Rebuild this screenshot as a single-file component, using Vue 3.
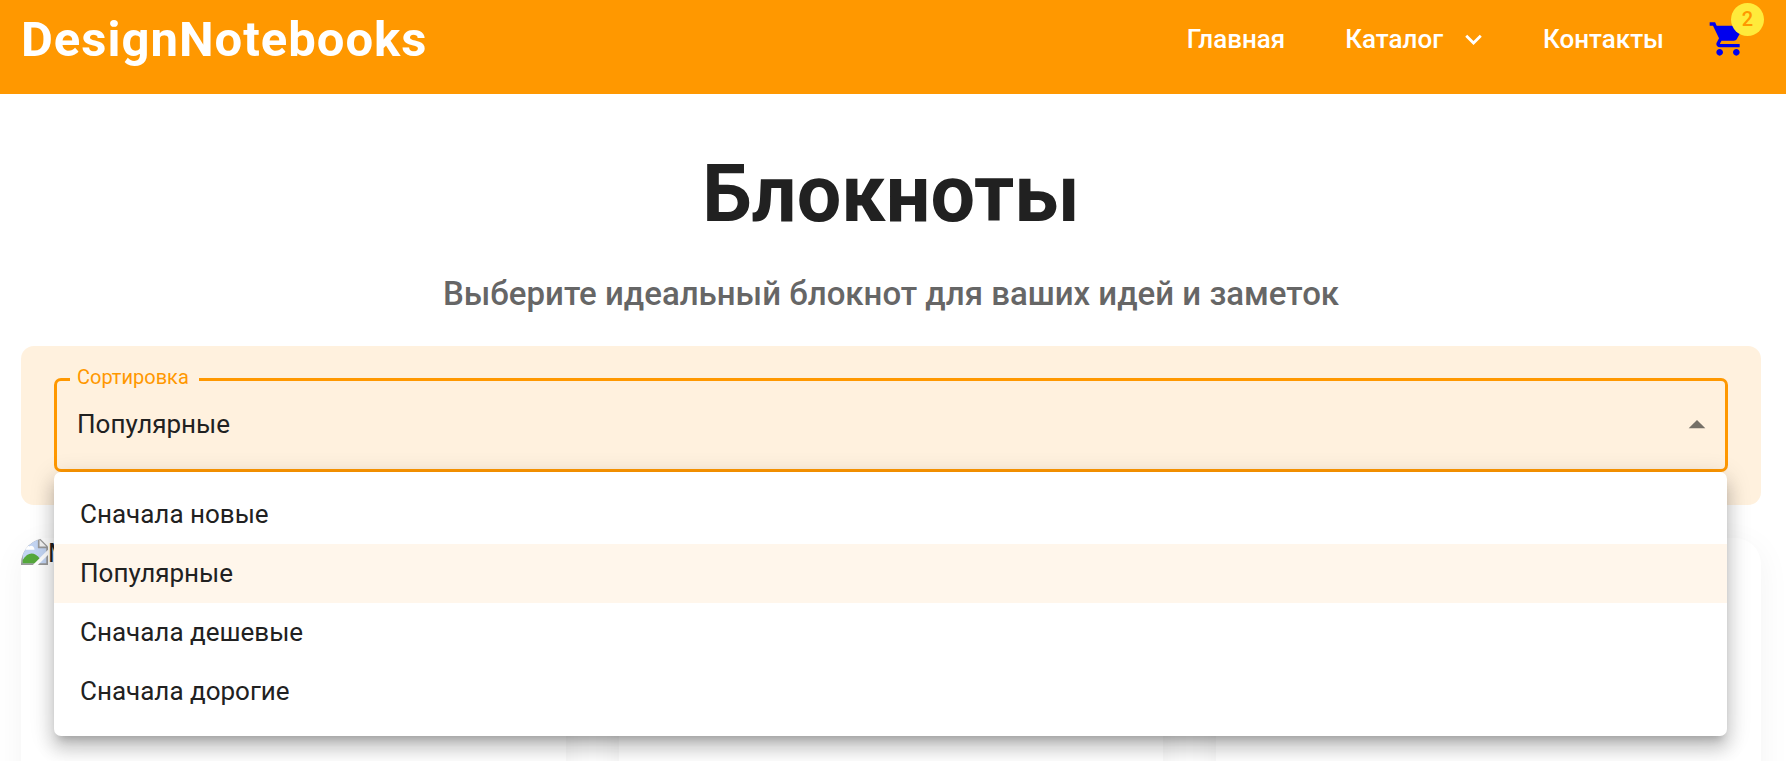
<script setup>
import { ref, computed } from 'vue'

const options = [
  { value: 'new', title: 'Сначала новые' },
  { value: 'popular', title: 'Популярные' },
  { value: 'cheap', title: 'Сначала дешевые' },
  { value: 'expensive', title: 'Сначала дорогие' },
]
const sort = ref('popular')
const open = ref(true)
const cartCount = ref(2)
const hasItems = computed(() => cartCount.value > 0)
const cards = [{ id: 1, alt: 'M' }, { id: 2 }, { id: 3 }]

const choose = (value) => {
  sort.value = value
  open.value = false
}
</script>

<template>
  <div class="page">
    <header class="header">
      <a class="logo" href="#">DesignNotebooks</a>
      <nav class="nav">
        <a class="nav-link" href="#">Главная</a>
        <a class="nav-link" href="#catalog">
          Каталог
          <svg class="chevron" viewBox="0 0 24 24" aria-hidden="true">
            <path d="M7.41 8.59 12 13.17l4.59-4.58L18 10l-6 6-6-6z" />
          </svg>
        </a>
        <a class="nav-link" href="#contacts">Контакты</a>
        <a class="cart" href="#cart">
          <svg viewBox="0 0 24 24" aria-hidden="true">
            <path d="M7 18c-1.1 0-1.99.9-1.99 2S5.9 22 7 22s2-.9 2-2-.9-2-2-2M1 2v2h2l3.6 7.59-1.35 2.45c-.16.28-.25.61-.25.96 0 1.1.9 2 2 2h12v-2H7.42c-.14 0-.25-.11-.25-.25l.03-.12.9-1.63h7.45c.75 0 1.41-.41 1.75-1.03l3.58-6.49c.08-.14.12-.31.12-.48 0-.55-.45-1-1-1H5.21l-.94-2zm16 16c-1.1 0-1.99.9-1.99 2s.89 2 1.99 2 2-.9 2-2-.9-2-2-2" />
          </svg>
          <span v-if="hasItems" class="badge">{{ cartCount }}</span>
        </a>
      </nav>
    </header>

    <main class="content">
      <h1 class="title">Блокноты</h1>
      <p class="subtitle">Выберите идеальный блокнот для ваших идей и заметок</p>

      <section class="filters">
        <div class="field">
          <label class="field-label" for="sort">Сортировка</label>
          <select id="sort" v-model="sort" class="field-select" @mousedown.prevent="open = !open">
            <option v-for="item in options" :key="item.value" :value="item.value">{{ item.title }}</option>
          </select>
          <svg class="field-arrow" :class="{ 'field-arrow--open': open }" viewBox="0 0 24 24" aria-hidden="true">
            <path d="m7 10 5 5 5-5z" />
          </svg>
          <div v-if="open" class="menu">
            <button
              v-for="item in options"
              :key="item.value"
              type="button"
              class="menu-item"
              :class="{ 'menu-item--selected': item.value === sort }"
              @click="choose(item.value)"
            >
              {{ item.title }}
            </button>
          </div>
        </div>
      </section>

      <section id="catalog" class="cards">
        <article v-for="card in cards" :key="card.id" class="card">
          <div v-if="card.alt" class="card-image">
            <svg class="broken" viewBox="0 0 16 16" aria-hidden="true">
              <path d="M0 0h11l5 5v11H0z" fill="#999" />
              <path d="M1 1h9v5h5v9H1z" fill="#c3d5f3" />
              <path d="M2 7c0-2 2-3 3-2 1-1 3 0 3 2z" fill="#fff" />
              <path d="M1 15v-2c3-5 7-5 10-1v3z" fill="#55a83c" />
              <path d="M11 1v4h4z" fill="#f3f3f3" />
              <path d="M16 7v3l-6 6H7z" fill="#fff" />
            </svg>
            <span>{{ card.alt }}</span>
          </div>
        </article>
      </section>
    </main>
  </div>
</template>

<style>
body {
  margin: 0;
  background: #fff;
}
</style>

<style scoped>
.page {
  font-family: Roboto, 'Liberation Sans', sans-serif;
  font-size: 26px;
  color: #212121;
  overflow: hidden;
}

.header {
  display: flex;
  align-items: center;
  justify-content: space-between;
  padding: 0 38px 16px 21px;
  min-height: 78px;
  background: #ff9800;
}

.logo {
  color: #fff;
  font-size: 49px;
  font-weight: 700;
  letter-spacing: 1px;
  text-decoration: none;
}

.nav {
  display: flex;
  align-items: center;
}

.nav-link {
  display: flex;
  align-items: center;
  padding: 0 26px;
  margin-right: 8px;
  color: #fff;
  font-weight: 500;
  text-decoration: none;
}

.chevron {
  width: 33px;
  height: 33px;
  margin-left: 14px;
  margin-right: -7px;
  fill: currentColor;
}

.cart {
  position: relative;
  display: flex;
  margin-left: 10px;
  color: #0000ee;
}

.cart svg {
  width: 40px;
  height: 40px;
  fill: currentColor;
}

.badge {
  position: absolute;
  top: -16px;
  right: -16px;
  width: 33px;
  height: 33px;
  border-radius: 50%;
  background: #ffeb3b;
  color: #ff9800;
  font-size: 20px;
  font-weight: 500;
  line-height: 33px;
  text-align: center;
}

.content {
  padding: 54px 25px 33px 21px;
}

.title {
  margin: 0 0 27px;
  font-size: 79px;
  font-weight: 700;
  line-height: 92px;
  text-align: center;
}

.subtitle {
  margin: 0 0 26px;
  color: #666;
  font-size: 33px;
  font-weight: 500;
  line-height: 53px;
  text-align: center;
}

.filters {
  padding: 32px 33px 33px;
  margin-bottom: 33px;
  border-radius: 13px;
  background: #fff1de;
}

.field {
  position: relative;
}

.field-select {
  display: block;
  box-sizing: border-box;
  width: 100%;
  height: 94px;
  padding: 0 53px 3px 20px;
  border: 3px solid #ff9800;
  border-radius: 7px;
  outline: none;
  appearance: none;
  background: transparent;
  color: inherit;
  font: inherit;
  cursor: pointer;
}

.field-label {
  position: absolute;
  top: -13px;
  left: 16px;
  padding: 0 10px 0 7px;
  background: #fff1de;
  color: #ff9800;
  font-size: 20px;
  line-height: 24px;
}

.field-arrow {
  position: absolute;
  top: 27px;
  right: 11px;
  width: 40px;
  height: 40px;
  fill: #757067;
  pointer-events: none;
}

.field-arrow--open {
  transform: rotate(180deg);
}

.menu {
  position: absolute;
  z-index: 10;
  top: 100%;
  left: 0;
  right: 1px;
  padding: 13px 0 15px;
  border-radius: 7px;
  background: #fff;
  box-shadow: 0 8px 8px -5px rgba(0, 0, 0, 0.2), 0 13px 17px 2px rgba(0, 0, 0, 0.14),
    0 5px 23px 3px rgba(0, 0, 0, 0.12);
}

.menu-item {
  display: block;
  width: 100%;
  height: 59px;
  padding: 0 26px 2px;
  border: 0;
  background: transparent;
  color: inherit;
  font: inherit;
  text-align: left;
  cursor: pointer;
}

.menu-item--selected {
  background: #fff6eb;
}

.cards {
  display: grid;
  grid-template-columns: repeat(3, 1fr);
  gap: 53px;
}

.card {
  min-height: 400px;
  overflow: hidden;
  border-radius: 26px;
  background: #fff;
  box-shadow: 0 7px 33px rgba(0, 0, 0, 0.05);
}

.card-image {
  display: flex;
}

.broken {
  width: 27px;
  height: 27px;
}
</style>
